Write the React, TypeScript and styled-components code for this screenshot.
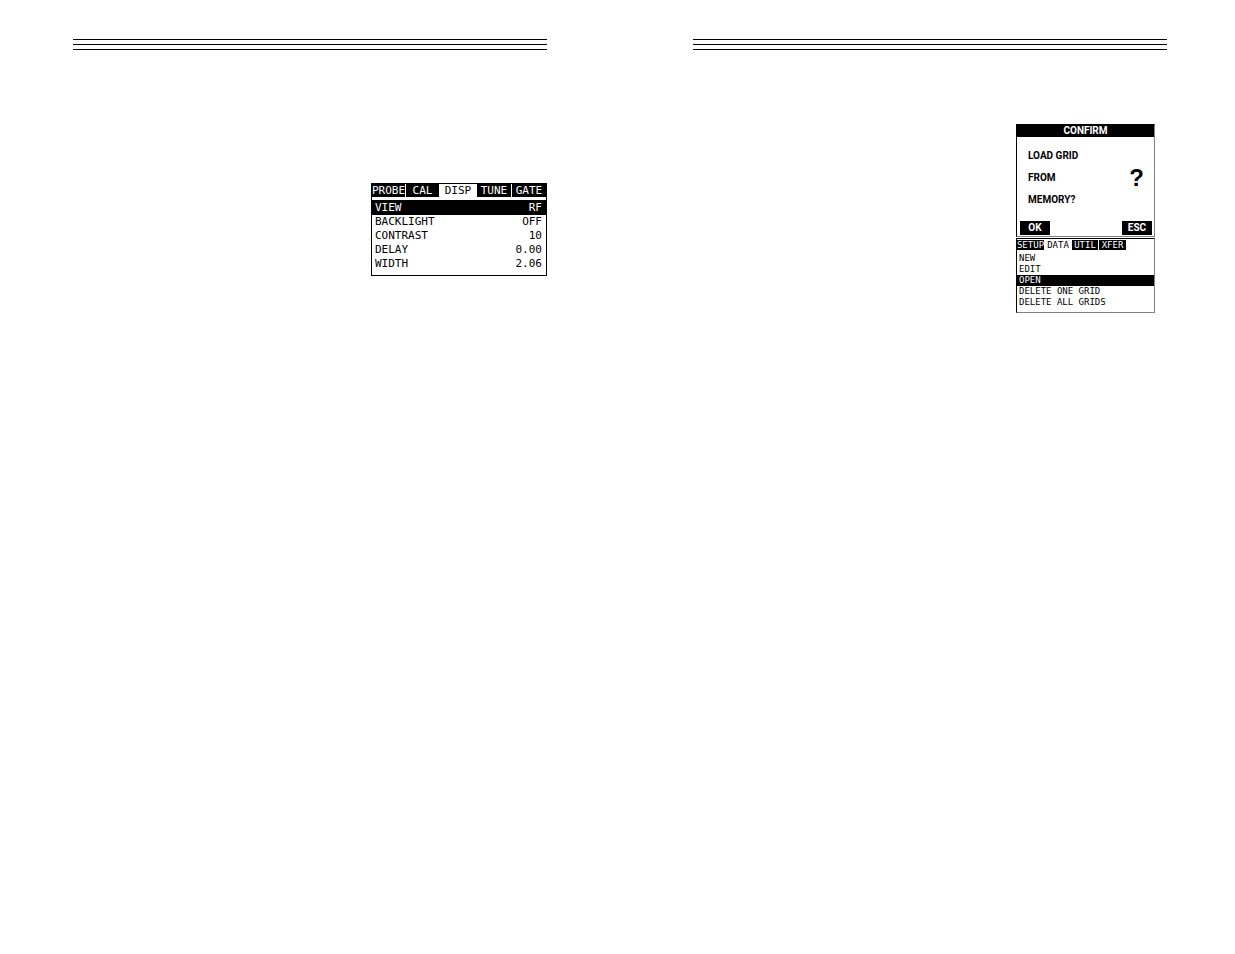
import React from "react";
import styled, { createGlobalStyle } from "styled-components";

const GlobalStyle = createGlobalStyle`
  * { box-sizing: border-box; }
  body { margin: 0; background: #fff; color: #000; }
  button { appearance: none; border: 0; margin: 0; padding: 0; cursor: pointer; }
`;

const Spread = styled.main`
  display: grid;
  grid-template-columns: 1fr 1fr;
  column-gap: 146px;
  align-items: start;
  padding: 39px 68px 0 73px;
`;

const Sheet = styled.section`
  display: flex;
  flex-direction: column;
`;

const TripleRule = styled.div`
  height: 11px;
  border-top: 1px solid #000;
  border-bottom: 1px solid #000;
  padding-top: 4px;

  &::after {
    content: "";
    display: block;
    height: 1px;
    background: #000;
  }
`;

const DisplayScreen = styled.div`
  align-self: flex-end;
  width: 176px;
  margin-top: 133px;
  padding-bottom: 4px;
  border: 1px solid #000;
  font-family: "DejaVu Sans Mono", monospace;
  font-size: 11px;
  line-height: 14px;
`;

const DisplayTabs = styled.div`
  display: grid;
  grid-template-columns: 33px 33px 36px 34px 34px;
  column-gap: 1px;
  margin-bottom: 3px;
`;

const Tab = styled.button<{ $active?: boolean }>`
  font: inherit;
  text-align: center;
  white-space: nowrap;
  background: ${(p) => (p.$active ? "#fff" : "#000")};
  color: ${(p) => (p.$active ? "#000" : "#fff")};
`;

const DisplayTab = styled(Tab)`
  height: 13px;
  line-height: 13px;
`;

const SettingsTable = styled.table`
  width: 100%;
  border-collapse: collapse;
`;

const SettingName = styled.th`
  padding: 0 0 0 3px;
  font-weight: 400;
  text-align: left;
`;

const SettingValue = styled.td`
  padding: 0 4px 0 0;
  text-align: right;
`;

const SettingRow = styled.tr<{ $active?: boolean }>`
  background: ${(p) => (p.$active ? "#000" : "#fff")};
  color: ${(p) => (p.$active ? "#fff" : "#000")};

  ${SettingName}, ${SettingValue} {
    padding-top: ${(p) => (p.$active ? "1px" : "0")};
  }
`;

const DeviceStack = styled.div`
  align-self: flex-end;
  width: 139px;
  margin: 74px 12px 0 0;
`;

const Confirm = styled.div`
  border: 1px solid #808080;
  border-left-color: #000;
  border-top-color: #000;
  font: 700 10px/12px Roboto, sans-serif;
`;

const ConfirmTitle = styled.h1`
  margin: 0;
  background: #000;
  color: #fff;
  font: inherit;
  text-align: center;
`;

const ConfirmBody = styled.div`
  display: flex;
  justify-content: space-between;
  align-items: center;
  padding: 8px 10px 10px 11px;
`;

const Message = styled.p`
  margin: 0;
  line-height: 22px;
`;

const QuestionMark = styled.span`
  font: 700 24px/24px "Liberation Sans", sans-serif;
`;

const ConfirmActions = styled.div`
  display: flex;
  justify-content: space-between;
  padding: 0 2px 1px 3px;
`;

const ActionButton = styled.button`
  width: 30px;
  height: 14px;
  background: #000;
  color: #fff;
  font: inherit;
  line-height: 14px;
`;

const GridMenu = styled.div`
  margin-top: 1px;
  padding-bottom: 4px;
  border: 1px solid #808080;
  border-left-color: #000;
  border-top-color: #000;
  font: 9px/11px "DejaVu Sans Mono", monospace;
`;

const GridTabs = styled.div`
  display: grid;
  grid-template-columns: 27px 26px 26px 27px;
  column-gap: 1px;
  padding-top: 1px;
  margin-bottom: 3px;
`;

const GridTab = styled(Tab)`
  display: flex;
  justify-content: center;
  height: 10px;
  line-height: 10px;
`;

const MenuList = styled.ul`
  margin: 0;
  padding: 0;
  list-style: none;
`;

const MenuItem = styled.button<{ $active?: boolean }>`
  display: block;
  width: 100%;
  height: 11px;
  padding-left: 2px;
  font: inherit;
  text-align: left;
  background: ${(p) => (p.$active ? "#000" : "#fff")};
  color: ${(p) => (p.$active ? "#fff" : "#000")};
`;

const displayTabs = ["PROBE", "CAL", "DISP", "TUNE", "GATE"];
const settings = [
  ["VIEW", "RF"],
  ["BACKLIGHT", "OFF"],
  ["CONTRAST", "10"],
  ["DELAY", "0.00"],
  ["WIDTH", "2.06"],
];
const gridTabs = ["SETUP", "DATA", "UTIL", "XFER"];
const gridItems = ["NEW", "EDIT", "OPEN", "DELETE ONE GRID", "DELETE ALL GRIDS"];

export default function App() {
  return (
    <>
      <GlobalStyle />
      <Spread>
        <Sheet>
          <TripleRule />
          <DisplayScreen>
            <DisplayTabs role="tablist">
              {displayTabs.map((t) => (
                <DisplayTab key={t} role="tab" aria-selected={t === "DISP"} $active={t === "DISP"}>
                  {t}
                </DisplayTab>
              ))}
            </DisplayTabs>
            <SettingsTable>
              <tbody>
                {settings.map(([name, value]) => (
                  <SettingRow key={name} $active={name === "VIEW"}>
                    <SettingName scope="row">{name}</SettingName>
                    <SettingValue>{value}</SettingValue>
                  </SettingRow>
                ))}
              </tbody>
            </SettingsTable>
          </DisplayScreen>
        </Sheet>
        <Sheet>
          <TripleRule />
          <DeviceStack>
            <Confirm role="dialog" aria-labelledby="confirm-title">
              <ConfirmTitle id="confirm-title">CONFIRM</ConfirmTitle>
              <ConfirmBody>
                <Message>
                  LOAD GRID
                  <br />
                  FROM
                  <br />
                  MEMORY?
                </Message>
                <QuestionMark>?</QuestionMark>
              </ConfirmBody>
              <ConfirmActions>
                <ActionButton>OK</ActionButton>
                <ActionButton>ESC</ActionButton>
              </ConfirmActions>
            </Confirm>
            <GridMenu>
              <GridTabs role="tablist">
                {gridTabs.map((t) => (
                  <GridTab key={t} role="tab" aria-selected={t === "DATA"} $active={t === "DATA"}>
                    {t}
                  </GridTab>
                ))}
              </GridTabs>
              <MenuList>
                {gridItems.map((item) => (
                  <li key={item}>
                    <MenuItem $active={item === "OPEN"}>{item}</MenuItem>
                  </li>
                ))}
              </MenuList>
            </GridMenu>
          </DeviceStack>
        </Sheet>
      </Spread>
    </>
  );
}
